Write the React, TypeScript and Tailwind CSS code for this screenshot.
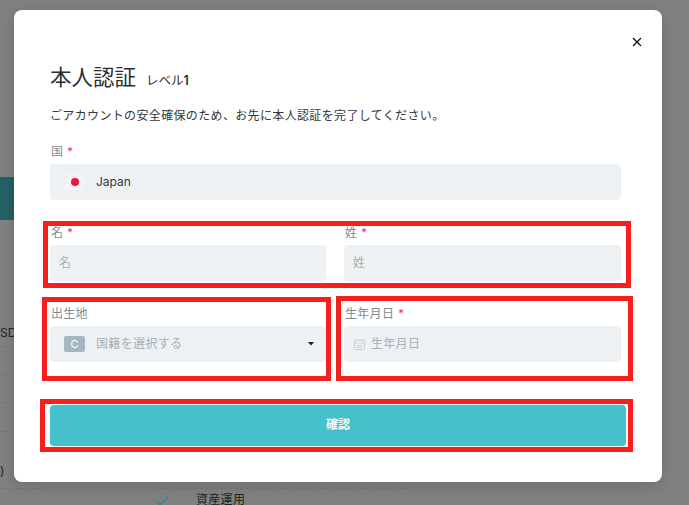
import React from "react";

const font = { fontFamily: '"Inter", "Noto Sans CJK JP", sans-serif' };

function Label({ text, required = true }: { text: string; required?: boolean }) {
  return (
    <div className="flex h-[17px] items-center pl-px text-[12px] leading-[17px] tracking-[0.3px] text-[#7d8b91]">
      <span>{text}</span>
      {required && <span className="ml-[4px] text-[11px] text-[#f0245c]">*</span>}
    </div>
  );
}

function Box({ children, className = "" }: { children: React.ReactNode; className?: string }) {
  return (
    <div className={`mt-[4px] flex h-[36px] items-center rounded-[4px] bg-[#eef1f4] text-[12px] tracking-[0.3px] ${className}`}>
      {children}
    </div>
  );
}

function Backdrop() {
  return (
    <div className="flex h-full flex-col">
      <div className="mt-[177px] h-[43px] w-[14px] bg-[#246165]" />
      <div className="mt-[100px] flex h-[27px] w-[14px] items-center whitespace-nowrap border-b border-dashed border-[#757575] text-[12px] text-[#222]">
        SD
      </div>
      <div className="h-[28px] w-[14px] border-b border-dashed border-[#757575]" />
      <div className="h-[28px] w-[14px] border-b border-dashed border-[#757575]" />
      <div className="h-[29px] w-[14px] border-b border-dashed border-[#757575]" />
      <div className="flex h-[56px] w-[14px] items-end pb-[8px] text-[12px] leading-[18px] text-[#222]">)</div>
      <div className="flex">
        <div className="w-[50px] border-t border-dashed border-[#757575]" />
        <div className="ml-[105px] flex h-[17px] w-[253px] border-t border-dashed border-[#757575] pt-[2px]">
          <svg className="mt-[5px]" width="14" height="10" viewBox="0 0 14 10" fill="none">
            <path d="M1 5l4 4 8-8" stroke="#2a8a90" strokeWidth="1.3" />
          </svg>
          <span className="ml-[27px] text-[12px] leading-[18px] tracking-[0.3px] text-[#222]">資産運用</span>
        </div>
      </div>
    </div>
  );
}

export default function App() {
  return (
    <div className="relative h-[505px] w-[689px] overflow-hidden bg-[#808080]" style={font}>
      <Backdrop />

      {/* dialog */}
      <div className="absolute left-[14px] top-[10px] h-[472px] w-[648px] rounded-[8px] bg-white pl-[36px] pr-[41px] pt-[52px] shadow-[0_4px_14px_rgba(0,0,0,0.14)]">
        <svg className="absolute right-[20px] top-[27px]" width="10" height="10" viewBox="0 0 10 10" fill="none">
          <path d="M1 1l8 8M9 1L1 9" stroke="#111" strokeWidth="1.3" />
        </svg>

        <div className="flex items-baseline text-[#2a2f33]">
          <span className="text-[21.5px] leading-[30px]">本人認証</span>
          <span className="ml-[10px] text-[12.5px] leading-[18px]">
            レベル<span className="font-semibold">1</span>
          </span>
        </div>
        <p className="mt-[15px] text-[12px] leading-[18px] tracking-[0.35px] text-[#33383c]">
          ごアカウントの安全確保のため、お先に本人認証を完了してください。
        </p>

        <div className="mt-[18px]">
          <Label text="国" />
          <Box className="pl-[14px]">
            <div className="flex h-[16px] w-[21px] items-center justify-center rounded-[2px] bg-[#f3f3f4]">
              <div className="h-[8px] w-[8px] rounded-full bg-[#e8173c]" />
            </div>
            <span className="ml-[11px] tracking-normal text-[#33383c]">Japan</span>
          </Box>
        </div>

        <div className="mt-[24px] flex gap-[18px]">
          <div className="w-[276px]">
            <Label text="名" />
            <Box className="pl-[9px] text-[#a3b0b8]">名</Box>
          </div>
          <div className="flex-1">
            <Label text="姓" />
            <Box className="pl-[9px] text-[#a3b0b8]">姓</Box>
          </div>
        </div>

        <div className="mt-[24px] flex gap-[18px]">
          <div className="w-[276px]">
            <Label text="出生地" required={false} />
            <Box className="pl-[14px] pr-[12px]">
              <div className="flex h-[16px] w-[21px] items-center justify-center rounded-[2px] bg-[#a6b8bf] text-[11px] tracking-normal text-white">
                C
              </div>
              <span className="ml-[11px] flex-1 tracking-[0.35px] text-[#a3b0b8]">国籍を選択する</span>
              <svg width="6" height="4" viewBox="0 0 6 4">
                <path d="M0 0h6L3 3.5z" fill="#222" />
              </svg>
            </Box>
          </div>
          <div className="flex-1">
            <Label text="生年月日" />
            <Box className="pl-[9px] text-[#a3b0b8]">
              <svg width="13" height="13" viewBox="0 0 13 13" fill="none" stroke="#ccd3d8" strokeWidth="1">
                <rect x="1.5" y="2" width="10" height="9.5" rx="1" />
                <path d="M1.5 5h10M4 1v2M9 1v2M3.5 7.5h6M3.5 9.5h6" />
              </svg>
              <span className="ml-[5px]">生年月日</span>
            </Box>
          </div>
        </div>

        <button className="mt-[43px] flex h-[41px] w-[576px] items-center justify-center rounded-[4px] bg-[#46c1cb] pb-[2px] text-[12px] font-semibold text-white">
          確認
        </button>
      </div>

      {/* red annotation rectangles */}
      <div className="absolute left-[43px] top-[221px] h-[67px] w-[588px] border-[5px] border-[#f5201e]" />
      <div className="absolute left-[42px] top-[297px] h-[84px] w-[289px] border-[5px] border-[#f5201e]" />
      <div className="absolute left-[336px] top-[296px] h-[85px] w-[297px] border-[5px] border-[#f5201e]" />
      <div className="absolute left-[40px] top-[399px] h-[53px] w-[593px] border-[5px] border-[#f5201e]" />
    </div>
  );
}
